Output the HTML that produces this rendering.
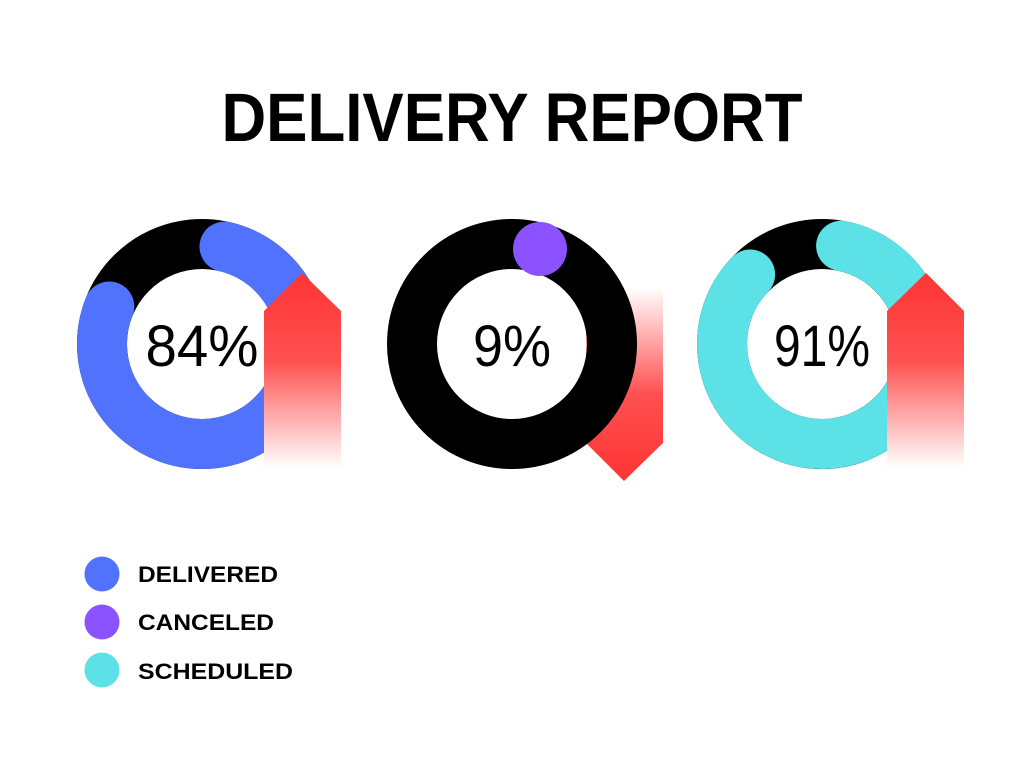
<!DOCTYPE html>
<html><head><meta charset="utf-8"><style>html,body{margin:0;padding:0;background:#fff}svg{display:block}</style></head>
<body>
<svg width="1024" height="768" viewBox="0 0 1024 768" xmlns="http://www.w3.org/2000/svg">
<defs>
<linearGradient id="up" x1="0" y1="0" x2="0" y2="1"><stop offset="0" stop-color="#ff3434"/><stop offset="0.45" stop-color="#ff5050"/><stop offset="1" stop-color="#ffffff"/></linearGradient>
<linearGradient id="dn" x1="0" y1="1" x2="0" y2="0"><stop offset="0" stop-color="#ff3434"/><stop offset="0.45" stop-color="#ff5050"/><stop offset="1" stop-color="#ffffff"/></linearGradient>
</defs>
<text x="512" y="141" text-anchor="middle" font-family="Liberation Sans, sans-serif" font-weight="bold" font-size="69" textLength="581" lengthAdjust="spacingAndGlyphs">DELIVERY REPORT</text>

<!-- chart 1 -->
<circle cx="202" cy="344" r="100" fill="none" stroke="#000" stroke-width="50"/>
<path d="M224.5 246.6 A100 100 0 1 1 109.3 306.5" fill="none" stroke="#5072fd" stroke-width="50" stroke-linecap="round"/>
<polygon points="264,311 302,273 341,311 341,468 264,468" fill="url(#up)"/>
<text x="202" y="366" text-anchor="middle" font-family="Liberation Sans, sans-serif" font-size="58" textLength="113" lengthAdjust="spacingAndGlyphs">84%</text>

<!-- chart 2 -->
<polygon points="586,287 663,287 663,443 624,481 586,443" fill="url(#dn)"/>
<circle cx="512" cy="344" r="100" fill="none" stroke="#000" stroke-width="50"/>
<circle cx="540" cy="249" r="27" fill="#8c52ff"/>
<text x="512" y="366" text-anchor="middle" font-family="Liberation Sans, sans-serif" font-size="58" textLength="78" lengthAdjust="spacingAndGlyphs">9%</text>

<!-- chart 3 -->
<circle cx="822" cy="344" r="100" fill="none" stroke="#000" stroke-width="50"/>
<path d="M841.1 245.8 A100 100 0 1 1 750.1 274.5" fill="none" stroke="#5ce1e6" stroke-width="50" stroke-linecap="round"/>
<polygon points="887,311 926,273 964,311 964,468 887,468" fill="url(#up)"/>
<text x="822" y="366" text-anchor="middle" font-family="Liberation Sans, sans-serif" font-size="58" textLength="96" lengthAdjust="spacingAndGlyphs">91%</text>

<!-- legend -->
<circle cx="102" cy="574" r="17.5" fill="#5072fd"/>
<circle cx="102" cy="622" r="17.5" fill="#8c52ff"/>
<circle cx="102" cy="670" r="17.5" fill="#5ce1e6"/>
<g font-family="Liberation Sans, sans-serif" font-weight="bold" font-size="22">
<text x="138" y="582" textLength="140" lengthAdjust="spacingAndGlyphs">DELIVERED</text>
<text x="138" y="630" textLength="136" lengthAdjust="spacingAndGlyphs">CANCELED</text>
<text x="138" y="679" textLength="155" lengthAdjust="spacingAndGlyphs">SCHEDULED</text>
</g>
</svg>
</body></html>
